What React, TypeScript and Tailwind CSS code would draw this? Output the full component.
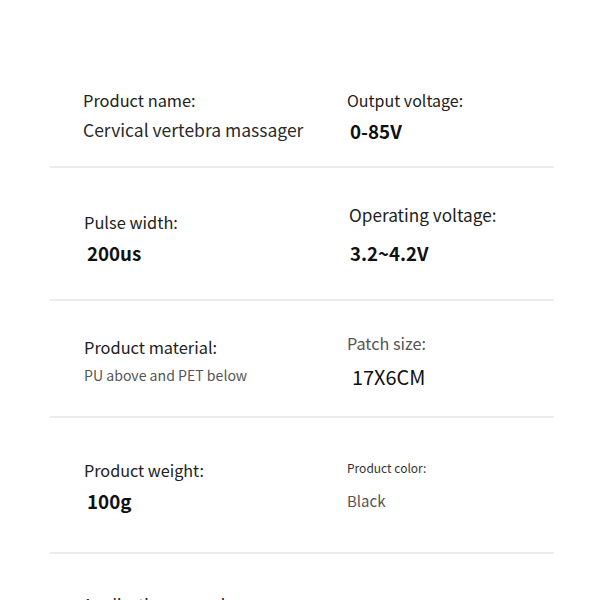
import React from "react";

const font = { fontFamily: '"Noto Sans CJK SC", "Noto Sans", sans-serif' };

function Divider() {
  return <div className="mx-[50px] w-[504px] h-[2px] bg-[#ececec]" />;
}

export default function App() {
  return (
    <div className="w-[600px] h-[600px] bg-white overflow-hidden text-[#1f1f1f]" style={font}>
      {/* Row 1 */}
      <div className="h-[166px] flex pl-[83px]">
        <div className="w-[264px] flex flex-col">
          <div className="mt-[88px] h-[24px] leading-[24px] text-[16.4px] text-[#222]">Product name:</div>
          <div className="mt-[6px] h-[24px] leading-[24px] text-[17.5px] text-[#2a2a2a]">Cervical vertebra massager</div>
        </div>
        <div className="flex flex-col">
          <div className="mt-[88px] h-[24px] leading-[24px] text-[16px] text-[#222]">Output voltage:</div>
          <div className="mt-[7px] h-[24px] leading-[24px] text-[18.8px] font-bold text-[#111] pl-[3px]">0-85V</div>
        </div>
      </div>
      <Divider />
      {/* Row 2 */}
      <div className="h-[131px] flex pl-[83px]">
        <div className="w-[264px] flex flex-col">
          <div className="mt-[42px] h-[24px] leading-[24px] text-[16.4px] text-[#222] pl-[1px]">Pulse width:</div>
          <div className="mt-[7px] h-[24px] leading-[24px] text-[18.7px] font-bold text-[#111] pl-[4px]">200us</div>
        </div>
        <div className="flex flex-col">
          <div className="mt-[35px] h-[24px] leading-[24px] text-[17.2px] text-[#222] pl-[2px]">Operating voltage:</div>
          <div className="mt-[14px] h-[24px] leading-[24px] text-[18.6px] font-bold text-[#111] pl-[3px]">3.2~4.2V</div>
        </div>
      </div>
      <Divider />
      {/* Row 3 */}
      <div className="h-[115px] flex pl-[83px]">
        <div className="w-[264px] flex flex-col">
          <div className="mt-[34px] h-[24px] leading-[24px] text-[16.4px] text-[#222] pl-[1px]">Product material:</div>
          <div className="mt-[4px] h-[24px] leading-[24px] text-[14.1px] text-[#555] pl-[1px]">PU above and PET below</div>
        </div>
        <div className="flex flex-col">
          <div className="mt-[30px] h-[24px] leading-[24px] text-[16.2px] text-[#555]">Patch size:</div>
          <div className="mt-[10px] h-[24px] leading-[24px] text-[19.9px] text-[#111] pl-[5px]">17X6CM</div>
        </div>
      </div>
      <Divider />
      {/* Row 4 */}
      <div className="h-[134px] flex pl-[83px]">
        <div className="w-[264px] flex flex-col">
          <div className="mt-[40px] h-[24px] leading-[24px] text-[16.2px] text-[#222] pl-[1px]">Product weight:</div>
          <div className="mt-[7px] h-[24px] leading-[24px] text-[18.8px] font-bold text-[#111] pl-[4px]">100g</div>
        </div>
        <div className="flex flex-col">
          <div className="mt-[38px] h-[24px] leading-[24px] text-[12px] text-[#333]">Product color:</div>
          <div className="mt-[9px] h-[24px] leading-[24px] text-[15px] text-[#555]">Black</div>
        </div>
      </div>
      <Divider />
      {/* Row 5 */}
      <div className="h-[60px] flex pl-[83px]">
        <div className="mt-[38px] h-[24px] leading-[24px] text-[16px] text-[#222]">Application scenarios:</div>
      </div>
    </div>
  );
}
